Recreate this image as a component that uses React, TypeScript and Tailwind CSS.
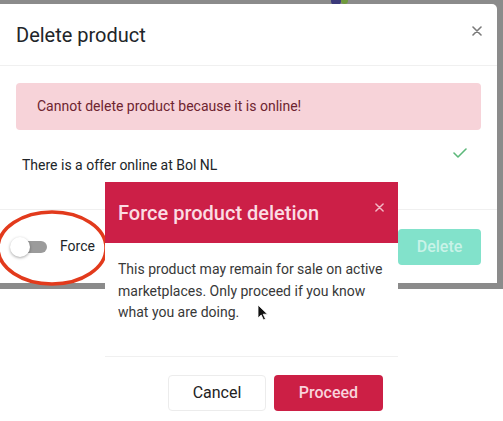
import React from 'react';

const font = { fontFamily: 'Roboto, "Helvetica Neue", Arial, sans-serif' };

const CloseIcon: React.FC<{ className?: string }> = ({ className }) => (
  <svg viewBox="0 0 10 10" className={className} fill="none" stroke="currentColor" strokeWidth="1.6" strokeLinecap="round">
    <path d="M1 1l8 8M9 1l-8 8" />
  </svg>
);

export default function App() {
  return (
    <div className="relative w-[503px] h-[421px] overflow-hidden bg-white" style={font}>
      {/* backdrop + main modal */}
      <div className="relative bg-[#8b8b8b] pt-[4px] pr-[6px] pb-[6px]">
        <div className="absolute left-[331px] top-0 h-[5px] w-[10px] rounded-b bg-[#3b3a7a]" />
        <div className="absolute left-[341px] top-0 h-[4px] w-[7px] rounded-b bg-[#6f9a3c]" />
        <div className="relative flex h-[279px] flex-col rounded-tr-[5px] bg-white">
          <div className="flex h-[62px] items-center justify-between border-b border-[#f0f0f0] pl-4 pr-[15px]">
            <h2 className="text-[20px] font-normal text-[#212529]">Delete product</h2>
            <CloseIcon className="mb-[8px] h-[10px] w-[10px] text-[#7a7a7a]" />
          </div>
          <div className="flex-1 px-4 pt-[17px]">
            <div className="flex h-[47px] items-center rounded-[4px] bg-[#f7d3d9] pl-[21px] text-[14px] text-[#6e2430]">
              Cannot delete product because it is online!
            </div>
            <div className="mt-[22px] flex items-start justify-between pl-[6px] pr-[14px]">
              <span className="mt-[3px] text-[14px] text-[#212529]">There is a offer online at Bol NL</span>
              <svg viewBox="0 0 14 10" className="mt-[-4px] h-[10px] w-[14px] text-[#5cb87a]" fill="none" stroke="currentColor" strokeWidth="1.6" strokeLinecap="round" strokeLinejoin="round">
                <path d="M1 5l4 4 8-8" />
              </svg>
            </div>
          </div>
          <div className="flex h-[74px] items-center justify-between border-t border-[#f0f0f0] pl-[10px] pr-4">
            <div className="flex items-center gap-[13px]">
              <div className="relative h-[20px] w-[37px]">
                <div className="absolute left-[4px] top-[4px] h-[12px] w-[33px] rounded-full bg-[#9b9b9b]" />
                <div className="absolute left-0 top-0 h-[20px] w-[20px] rounded-full bg-white shadow-[0_1px_3px_rgba(0,0,0,0.35)]" />
              </div>
              <span className="text-[14px] text-[#212529]">Force</span>
            </div>
            <button className="flex h-[36px] w-[83px] items-center justify-center rounded-[4px] bg-[#82e2cb] text-[16px] font-medium text-[#c9f3e8]">
              Delete
            </button>
          </div>
        </div>
      </div>

      {/* annotation ellipse */}
      <svg className="absolute left-0 top-[210px]" width="112" height="80" viewBox="0 0 112 80" fill="none">
        <ellipse cx="52" cy="38" rx="54" ry="36" stroke="#e23a1c" strokeWidth="3.5" />
      </svg>

      {/* confirm popup */}
      <div className="absolute left-[105px] top-[182px] bottom-0 w-[293px] bg-white">
        <div className="flex h-[61px] items-center justify-between bg-[#cc1f47] pl-[13px] pr-[14px]">
          <h3 className="text-[20px] font-medium text-[#fbdce3]">Force product deletion</h3>
          <CloseIcon className="mb-[10px] h-[9px] w-[9px] text-[#f3b9c6]" />
        </div>
        <p className="pl-[13px] pr-[8px] pt-[16px] text-[14px] leading-[21.5px] text-[#383838]">
          This product may remain for sale on active marketplaces. Only proceed if you know what you are doing.
        </p>
        <div className="mt-[32px] border-t border-[#f0f0f0]" />
        <div className="flex justify-end gap-[8px] pr-[15px] pt-[18px]">
          <button className="flex h-[36px] w-[98px] items-center justify-center rounded-[4px] border border-[#ececec] bg-white text-[16px] text-[#222]">
            Cancel
          </button>
          <button className="flex h-[36px] w-[109px] items-center justify-center rounded-[4px] bg-[#cc1f45] text-[16px] font-medium text-[#f9d3dc]">
            Proceed
          </button>
        </div>
      </div>

      {/* mouse cursor */}
      <svg className="absolute left-[257px] top-[304px]" width="12" height="17" viewBox="0 0 12 17">
        <path d="M1 1v13l3.2-3 2.3 5 2-1-2.3-4.8H10.5z" fill="#111" stroke="#fff" strokeWidth="0.8" />
      </svg>
    </div>
  );
}
